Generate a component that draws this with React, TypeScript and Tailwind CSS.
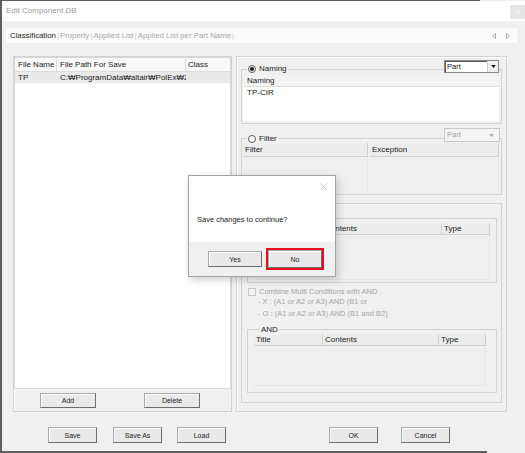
import React from "react";

const FONT = "font-['Liberation_Sans',Arial,sans-serif]";

function Btn({ label, className }: { label: string; className: string }) {
  return (
    <div
      className={`flex items-center justify-center border border-[#a9a9a9] border-b-[#6e6e6e] border-r-[#6e6e6e] bg-[#e9e9e9] text-[7px] leading-none text-[#222] shadow-[inset_1px_1px_0_#ffffff] ${className}`}
    >
      {label}
    </div>
  );
}

function Radio({ checked }: { checked?: boolean }) {
  return (
    <span className="grid h-[8px] w-[8px] place-items-center rounded-full border border-[#5a5a5a] bg-white">
      {checked && <span className="h-[4px] w-[4px] rounded-full bg-[#1a1a1a]" />}
    </span>
  );
}

function Combo({ disabled }: { disabled?: boolean }) {
  if (disabled)
    return (
      <div className="flex h-[14px] w-[56px] items-center border border-[#c9c9c9] bg-[#f4f4f4] pl-[2px] text-[7.5px] leading-none text-[#a3a3a3]">
        Part
        <svg viewBox="0 0 6 4" className="ml-auto mr-[5px] h-[3px] w-[5px]">
          <path d="M0 0h6L3 4z" fill="#a8a8a8" />
        </svg>
      </div>
    );
  return (
    <div className="flex h-[13px] w-[55px] items-center border border-[#8a8a8a] bg-white pl-[2px] text-[7.5px] leading-none text-[#222] shadow-[inset_1px_1px_0_#5a5a5a]">
      Part
      <div className="ml-auto flex h-full w-[11px] items-center justify-center border-l border-[#d0d0d0] bg-[#f0f0f0]">
        <svg viewBox="0 0 6 4" className="h-[3px] w-[5px]">
          <path d="M0 0h6L3 4z" fill="#111" />
        </svg>
      </div>
    </div>
  );
}

function HeadCell({ label, className }: { label: string; className: string }) {
  return (
    <div
      className={`flex items-center border-b border-r border-[#cfcfcf] bg-[#ececec] pl-[2px] text-[8px] leading-none text-[#222] ${className}`}
    >
      {label}
    </div>
  );
}

function TripleList({
  titleW,
  contentsW,
  typeW,
  bodyH,
}: {
  titleW: string;
  contentsW: string;
  typeW: string;
  bodyH: string;
}) {
  return (
    <div className="flex flex-col">
      <div className="flex h-[12px]">
        <HeadCell label="Title" className={titleW} />
        <HeadCell label="Contents" className={contentsW} />
        <HeadCell label="Type" className={typeW} />
      </div>
      <div className={`border-b border-r border-[#e6e6e6] bg-[#efefef] ${bodyH}`} />
    </div>
  );
}

function LeftPanel() {
  return (
    <div className="flex h-[356px] w-[219px] flex-col border border-[#d3d3d3] shadow-[inset_1px_1px_0_#ffffff]">
      <div className="flex h-[332px] flex-col border border-[#d9d9d9] bg-white">
        <div className="flex h-[14px] text-[8px] leading-none text-[#222]">
          <div className="flex w-[42px] items-center border-b border-r border-[#dcdcdc] bg-[#f9f9f9] pl-[3px]">
            File Name
          </div>
          <div className="flex w-[129px] items-center border-b border-r border-[#dcdcdc] bg-[#f9f9f9] pl-[3px]">
            File Path For Save
          </div>
          <div className="flex flex-1 items-center border-b border-[#dcdcdc] bg-[#f9f9f9] pl-[2px]">
            Class
          </div>
        </div>
        <div className="flex h-[11px] bg-[#e9e9e9] text-[8px] leading-none text-[#222]">
          <div className="flex w-[42px] items-center pl-[3px]">TP</div>
          <div className="flex w-[129px] items-center overflow-hidden whitespace-nowrap pl-[3px]">
            C:₩ProgramData₩altair₩PolEx₩2022₩ComponentDB₩TP.xml
          </div>
        </div>
      </div>
      <div className="mt-[4px] flex">
        <Btn label="Add" className="ml-[26px] h-[15px] w-[56px]" />
        <Btn label="Delete" className="ml-[48px] h-[15px] w-[56px]" />
      </div>
    </div>
  );
}

function RightPanel() {
  return (
    <div className="flex h-[356px] w-[271px] flex-col border border-[#d3d3d3] pl-[4px] shadow-[inset_1px_1px_0_#ffffff]">
      {/* Naming */}
      <div className="relative mt-[12px] flex h-[55px] w-[261px] flex-col border border-[#d3d3d3] pb-[2px] pl-[1px] pr-[2px] pt-[6px]">
        <div className="absolute -top-[7px] left-[5px] flex items-center gap-[3px] bg-[#f0f0f0] px-[1px] text-[8px] leading-[11px] text-[#222]">
          <Radio checked />
          Naming
        </div>
        <div className="absolute -top-[10px] right-[2px]">
          <Combo />
        </div>
        <div className="flex flex-1 flex-col bg-white">
          <div className="flex h-[11px] items-center border-b border-[#dedede] bg-[#f3f3f3] pl-[4px] text-[8px] leading-none text-[#222]">
            Naming
          </div>
          <div className="flex h-[11px] items-center pl-[4px] text-[8px] leading-none text-[#222]">
            TP-CIR
          </div>
        </div>
      </div>

      {/* Filter */}
      <div className="relative mt-[14px] flex h-[57px] w-[261px] gap-[2px] border border-[#d3d3d3] pl-[1px] pr-[2px] pt-[4px]">
        <div className="absolute -top-[6px] left-[5px] flex items-center gap-[3px] bg-[#f0f0f0] px-[1px] text-[8px] leading-[11px] text-[#222]">
          <Radio />
          Filter
        </div>
        <div className="absolute -top-[11px] right-[1px]">
          <Combo disabled />
        </div>
        <div className="flex w-[125px] flex-col">
          <HeadCell label="Filter" className="h-[14px]" />
          <div className="flex-1 border-r border-[#e6e6e6] bg-[#efefef]" />
        </div>
        <div className="flex w-[129px] flex-col">
          <HeadCell label="Exception" className="h-[14px]" />
          <div className="flex-1 border-r border-[#e6e6e6] bg-[#efefef]" />
        </div>
      </div>

      {/* Conditions */}
      <div className="mt-[8px] flex h-[200px] w-[261px] flex-col border border-[#d3d3d3]">
        <div className="relative ml-[5px] mt-[14px] h-[65px] w-[250px] border border-[#d3d3d3] pl-[6px] pt-[4px]">
          <div className="absolute -top-[6px] left-[12px] bg-[#f0f0f0] px-[1px] text-[8px] leading-[11px] text-[#222]">
            OR
          </div>
          <TripleList
            titleW="w-[69px]"
            contentsW="w-[119px]"
            typeW="w-[48px]"
            bodyH="h-[45px] w-[236px]"
          />
        </div>
        <div className="ml-[6px] mt-[4px] flex h-[9px] items-center gap-[3px] text-[7.5px] leading-none text-[#a6a6a6]">
          <span className="h-[8px] w-[8px] border border-[#c4c4c4] bg-[#f4f4f4]" />
          Combine Multi Conditions with AND
        </div>
        <div className="ml-[16px] flex h-[12px] items-center text-[7.5px] leading-none text-[#a6a6a6]">
          - X : (A1 or A2 or A3) AND (B1 or
        </div>
        <div className="ml-[16px] flex h-[12px] items-center text-[7.5px] leading-none text-[#a6a6a6]">
          - O : (A1 or A2 or A3) AND (B1 and B2)
        </div>
        <div className="relative ml-[5px] mt-[9px] h-[64px] w-[250px] border border-[#d3d3d3] pl-[6px] pt-[4px]">
          <div className="absolute -top-[6px] left-[12px] bg-[#f0f0f0] px-[1px] text-[8px] leading-[11px] text-[#222]">
            AND
          </div>
          <TripleList
            titleW="w-[69px]"
            contentsW="w-[116px]"
            typeW="w-[47px]"
            bodyH="h-[40px] w-[232px]"
          />
        </div>
      </div>
    </div>
  );
}

function Dialog() {
  return (
    <div className="absolute left-[186px] top-[175px] flex h-[102px] w-[148px] flex-col border border-[#a3a3a3] bg-white shadow-[2px_3px_8px_rgba(0,0,0,0.18)]">
      <div className="flex h-[66px] flex-col">
        <div className="flex justify-end pr-[8px] pt-[7px]">
          <svg viewBox="0 0 8 8" className="h-[7px] w-[7px]">
            <path d="M0.5 0.5l7 7M7.5 0.5l-7 7" stroke="#c4c4c4" strokeWidth="0.9" />
          </svg>
        </div>
        <div className="mt-[26px] pl-[8px] text-[7.5px] leading-none text-[#222]">
          Save changes to continue?
        </div>
      </div>
      <div className="flex flex-1 items-center bg-[#f0f0f0]">
        <Btn label="Yes" className="ml-[19px] h-[16px] w-[54px] text-[7.5px]" />
        <div className="ml-[4px] flex h-[22px] w-[58px] border-2 border-[#e0121e] p-0">
          <Btn label="No" className="h-full w-full text-[7.5px]" />
        </div>
      </div>
    </div>
  );
}

export default function App() {
  return (
    <div
      className={`relative flex h-[453px] w-[525px] flex-col overflow-hidden border-l-2 border-[#5e5e5e] bg-[#f0f0f0] ${FONT}`}
    >
      <div className="h-px w-[478px] bg-[#5e5e5e]" />

      {/* Title bar */}
      <div className="flex h-[20px] bg-white">
        <span className="ml-[4px] mt-[6px] text-[8px] leading-none text-[#9d9d9d]">
          Edit Component DB
        </span>
        <div className="ml-auto mt-[4px] flex h-[14px] w-[15px] items-center justify-center bg-[#e4e4e4]">
          <svg viewBox="0 0 6 6" className="h-[4px] w-[4px]">
            <path d="M0 0l6 6M6 0L0 6" stroke="#ffffff" strokeWidth="1" />
          </svg>
        </div>
      </div>

      {/* Tabs */}
      <div className="ml-[4px] mt-[7px] flex h-[15px] w-[511px] items-center bg-[#fbfbfb] pl-[4px] text-[7.8px] leading-none">
        <span className="text-[#222]">Classification</span>
        <span className="mx-[1px] text-[#c8c8c8]">|</span>
        <span className="text-[#a8a8a8]">Property</span>
        <span className="mx-[1px] text-[#c8c8c8]">|</span>
        <span className="text-[#a8a8a8]">Applied List</span>
        <span className="mx-[1px] text-[#c8c8c8]">|</span>
        <span className="text-[#a8a8a8]">Applied List per Part Name</span>
        <span className="mx-[1px] text-[#c8c8c8]">|</span>
        <div className="ml-auto mr-[7px] flex items-center gap-[10px]">
          <svg viewBox="0 0 4 6" className="h-[6px] w-[4px]">
            <path d="M3.5 0.5v5L0.5 3z" fill="none" stroke="#9a9a9a" strokeWidth="0.8" />
          </svg>
          <svg viewBox="0 0 4 6" className="h-[6px] w-[4px]">
            <path d="M0.5 0.5v5L3.5 3z" fill="none" stroke="#9a9a9a" strokeWidth="0.8" />
          </svg>
        </div>
      </div>

      {/* Panels */}
      <div className="ml-[11px] mt-[13px] flex gap-[4px]">
        <LeftPanel />
        <RightPanel />
      </div>

      {/* Bottom buttons */}
      <div className="ml-[46px] mt-[15px] flex">
        <Btn label="Save" className="h-[16px] w-[49px]" />
        <Btn label="Save As" className="ml-[16px] h-[16px] w-[49px]" />
        <Btn label="Load" className="ml-[15px] h-[16px] w-[49px]" />
        <Btn label="OK" className="ml-[103px] h-[16px] w-[49px]" />
        <Btn label="Cancel" className="ml-[23px] h-[16px] w-[49px]" />
      </div>

      <div className="mt-[8px] h-[2px] w-[485px] bg-[#5e5e5e]" />

      <Dialog />
    </div>
  );
}
